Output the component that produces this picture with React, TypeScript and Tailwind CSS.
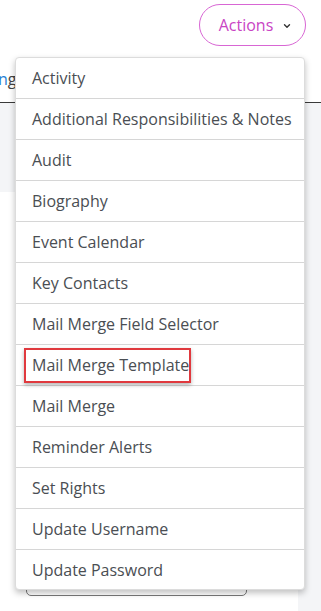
import React from "react";

const items = [
  "Activity",
  "Additional Responsibilities & Notes",
  "Audit",
  "Biography",
  "Event Calendar",
  "Key Contacts",
  "Mail Merge Field Selector",
  "Mail Merge Template",
  "Mail Merge",
  "Reminder Alerts",
  "Set Rights",
  "Update Username",
  "Update Password",
];

export default function App() {
  return (
    <div className="relative w-[321px] h-[611px] bg-white overflow-hidden font-['Open_Sans',sans-serif] flex flex-col">
      {/* Top bar */}
      <div className="h-[51px] flex justify-end items-start pt-[4px] pr-[15px]">
        <button className="w-[107px] h-[42px] rounded-full border border-[#d866d4] text-[#c944c4] text-[16px] flex items-center justify-center gap-[9px] pl-[6px]">
          Actions
          <svg width="10" height="10" viewBox="0 0 10 10" className="mt-[2px]">
            <path d="M2.5 3.8 L5 6.3 L7.5 3.8" fill="none" stroke="#333" strokeWidth="1.4" strokeLinecap="round" strokeLinejoin="round" />
          </svg>
        </button>
      </div>

      {/* Tabs */}
      <div className="h-[52px] border-b border-[#3a3a3a] flex items-end pb-[11px] -ml-[2px] text-[16px]">
        <span className="text-[#2a7fd4]">n</span>
        <span className="text-[#444]">g</span>
      </div>

      {/* Body */}
      <div className="flex-1 bg-[#f4f5f7] pt-[89px] flex">
        <div className="w-[298px] bg-white relative">
          <div className="absolute left-[26px] top-[371px] w-[221px] h-[33px] border border-[#777] rounded-[5px]"></div>
        </div>
      </div>

      {/* Dropdown menu */}
      <div className="absolute left-[15px] top-[57px] w-[290px] bg-white border border-[#dcdcdc] rounded-[4px] shadow-[0_3px_6px_rgba(0,0,0,0.25)]">
        {items.map((label, i) => {
          const last = i === items.length - 1;
          return (
            <div
              key={label}
              className={`relative flex items-center pl-[16px] text-[16px] text-[#4a4e53] ${
                last ? "h-[39px]" : "h-[41px] border-b border-[#d6d6d6]"
              }`}
            >
              {label}
              {label === "Mail Merge Template" && (
                <div className="absolute left-[8px] top-[3px] w-[167px] h-[35px] border-2 border-[#e0393e] shadow-[0_2px_4px_rgba(0,0,0,0.3)]"></div>
              )}
            </div>
          );
        })}
      </div>
    </div>
  );
}
